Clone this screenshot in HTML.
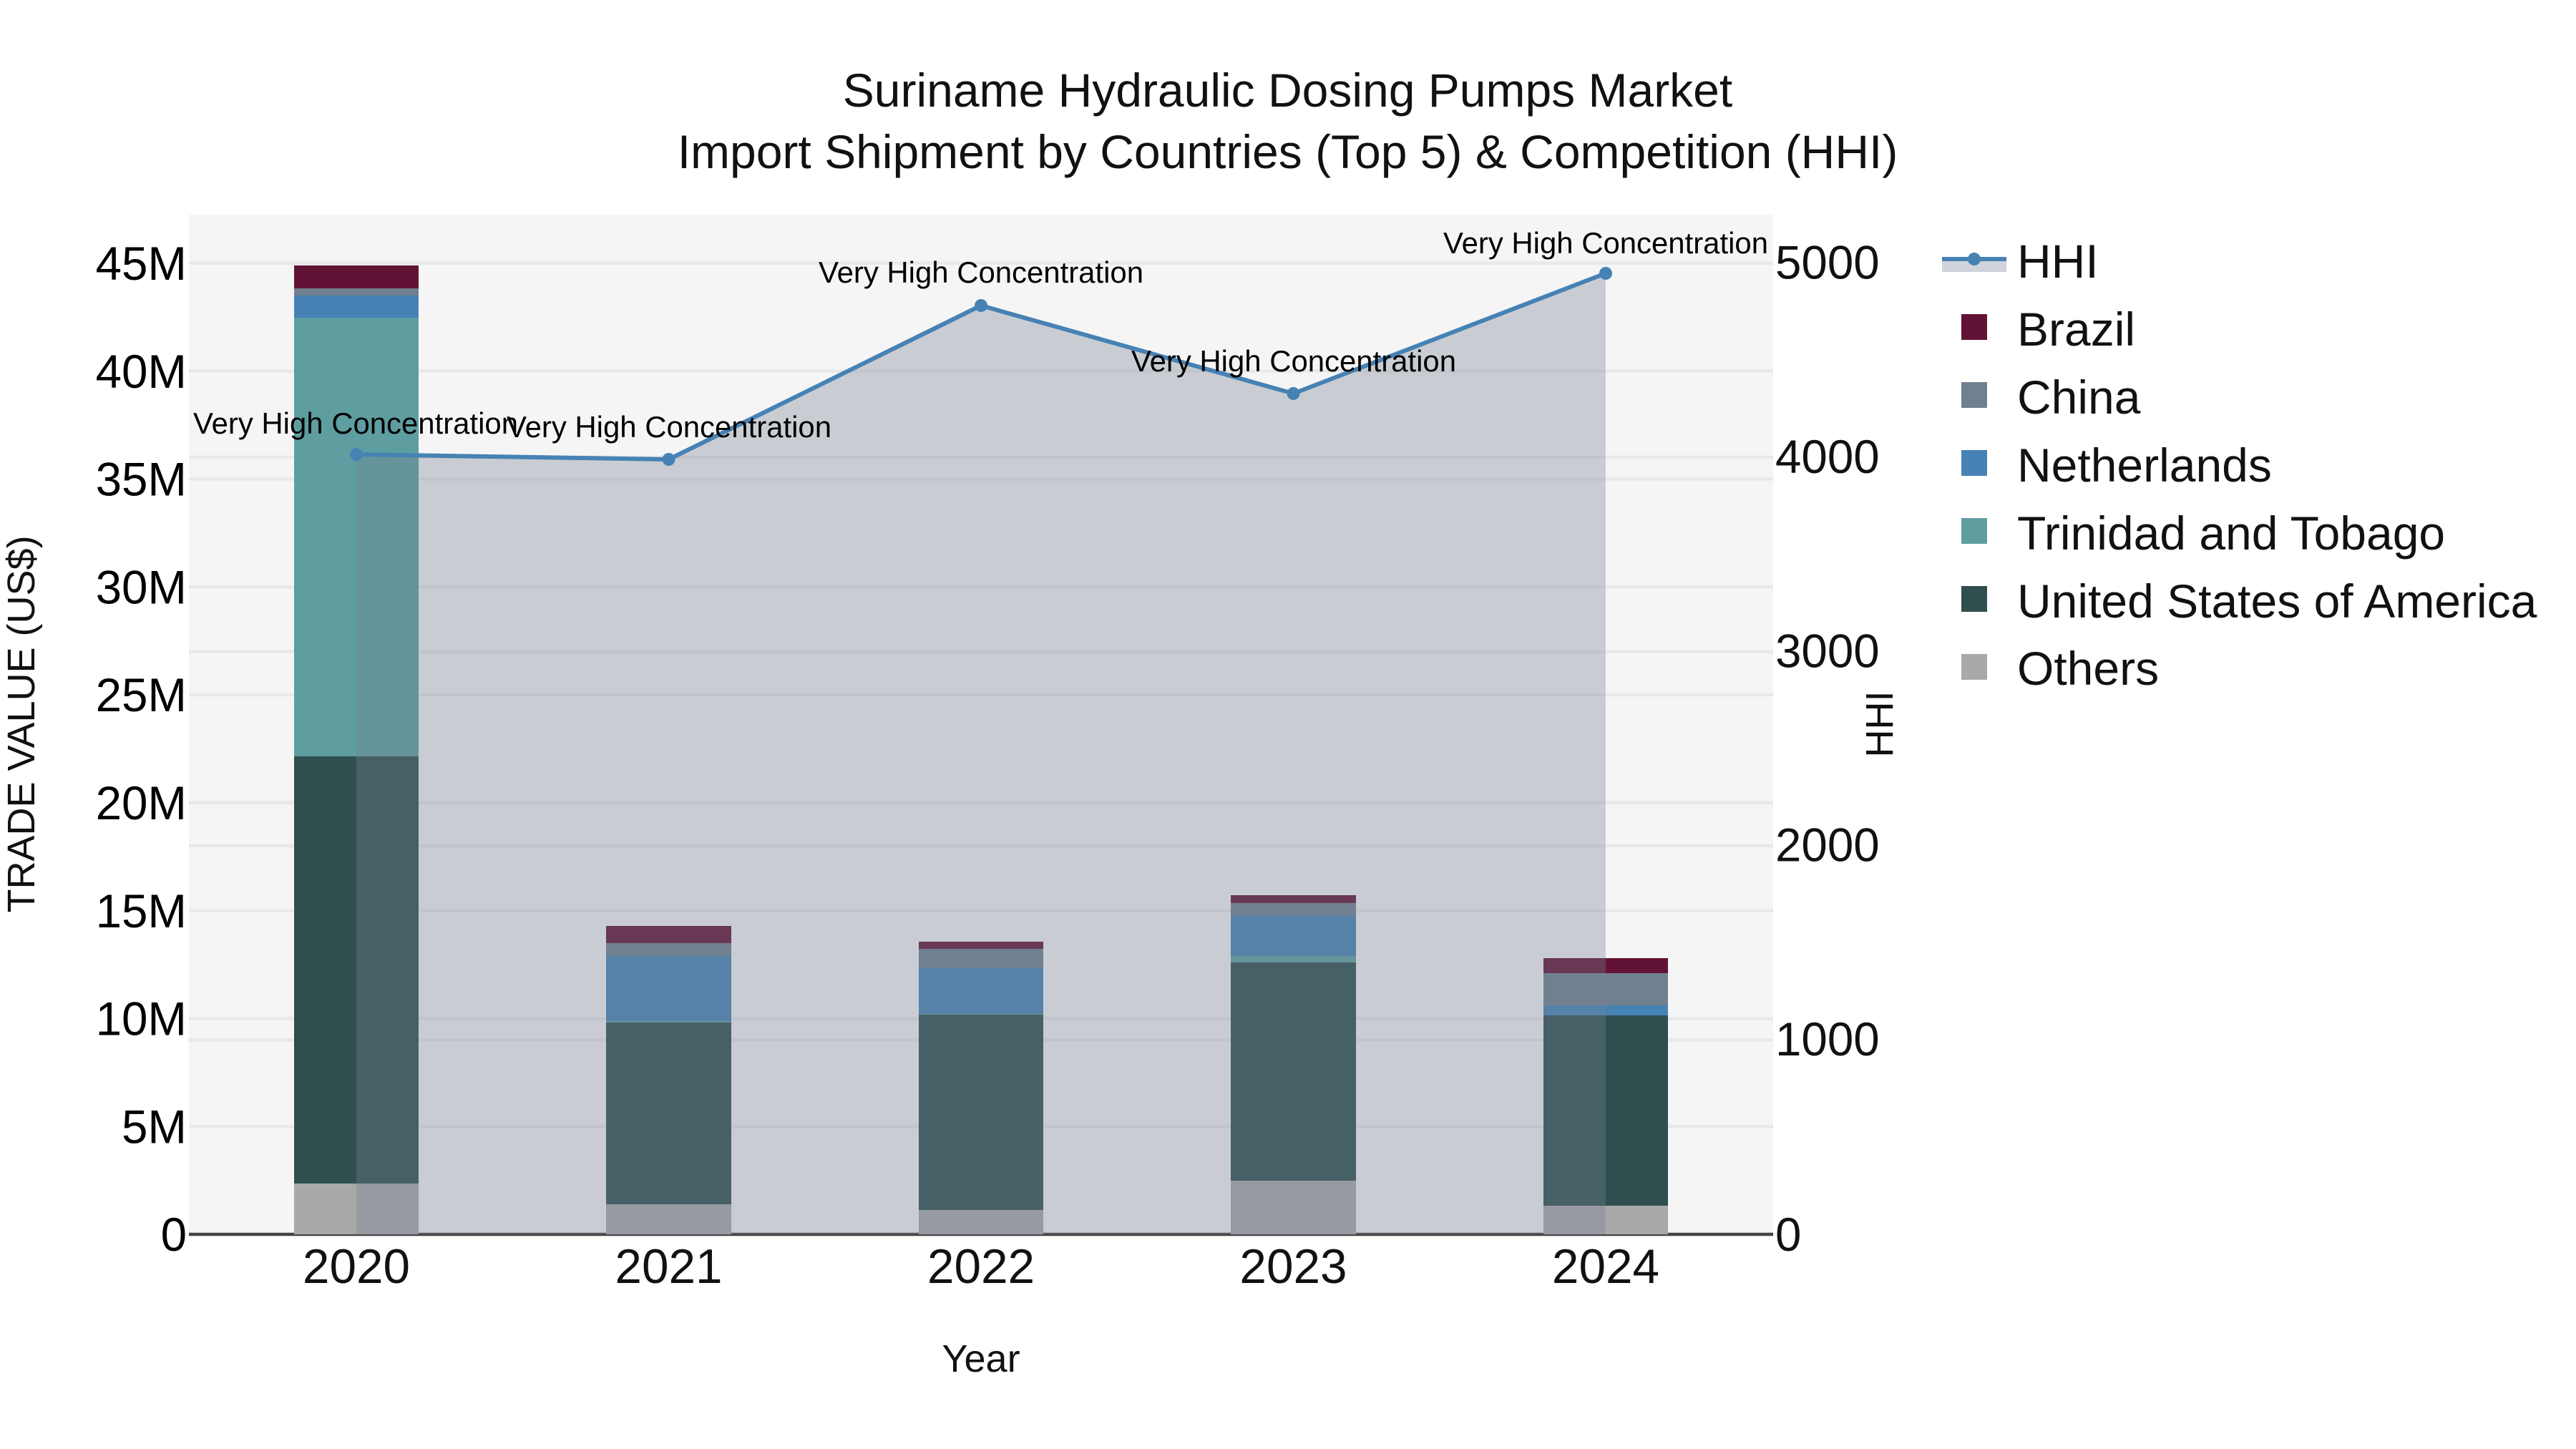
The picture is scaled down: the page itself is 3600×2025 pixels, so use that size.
<!DOCTYPE html>
<html lang="en">
<head>
<meta charset="utf-8">
<title>Suriname Hydraulic Dosing Pumps Market</title>
<style>
html,body{margin:0;padding:0;background:#fff;width:3600px;height:2025px;overflow:hidden}
svg{display:block}
text{font-family:"Liberation Sans",Arial,sans-serif}
.t{font-size:66px;fill:#111;text-anchor:middle}
.yl{font-size:65.5px;fill:#000;text-anchor:end}
.yr{font-size:65.5px;fill:#111;text-anchor:start}
.x{font-size:67.5px;fill:#111;text-anchor:middle}
.lg{font-size:66px;fill:#111}
.an{font-size:41.9px;fill:#000;text-anchor:middle}
.ax{font-size:54px;fill:#111;text-anchor:middle}
</style>
</head>
<body>
<svg width="3600" height="2025" viewBox="0 0 3600 2025" xmlns="http://www.w3.org/2000/svg">
<rect width="3600" height="2025" fill="#fff"/>
<rect x="264" y="300" width="2214" height="1425" fill="#f5f5f5"/>
<!-- gridlines -->
<g stroke="#e8e8e8" stroke-width="4.5">
<line x1="264" x2="2478" y1="367.8" y2="367.8"/>
<line x1="264" x2="2478" y1="518.6" y2="518.6"/>
<line x1="264" x2="2478" y1="669.4" y2="669.4"/>
<line x1="264" x2="2478" y1="820.2" y2="820.2"/>
<line x1="264" x2="2478" y1="971" y2="971"/>
<line x1="264" x2="2478" y1="1121.8" y2="1121.8"/>
<line x1="264" x2="2478" y1="1272.6" y2="1272.6"/>
<line x1="264" x2="2478" y1="1423.4" y2="1423.4"/>
<line x1="264" x2="2478" y1="1574.2" y2="1574.2"/>
<line x1="264" x2="2478" y1="639" y2="639"/>
<line x1="264" x2="2478" y1="910.8" y2="910.8"/>
<line x1="264" x2="2478" y1="1182" y2="1182"/>
<line x1="264" x2="2478" y1="1453.4" y2="1453.4"/>
</g>
<line x1="264" x2="2478" y1="1725" y2="1725" stroke="#444" stroke-width="4.5"/>
<!-- bars 2020 -->
<g shape-rendering="crispEdges">
<rect x="411" y="371" width="174" height="32" fill="#621335"/>
<rect x="411" y="403" width="174" height="10" fill="#708090"/>
<rect x="411" y="413" width="174" height="31" fill="#4682b4"/>
<rect x="411" y="444" width="174" height="613" fill="#5f9ea0"/>
<rect x="411" y="1057" width="174" height="597" fill="#2f4f4f"/>
<rect x="411" y="1654" width="174" height="71" fill="#a9a9a9"/>
<!-- 2021 -->
<rect x="847" y="1294" width="175" height="24" fill="#621335"/>
<rect x="847" y="1318" width="175" height="18" fill="#708090"/>
<rect x="847" y="1336" width="175" height="91" fill="#4682b4"/>
<rect x="847" y="1427" width="175" height="2" fill="#5f9ea0"/>
<rect x="847" y="1429" width="175" height="254" fill="#2f4f4f"/>
<rect x="847" y="1683" width="175" height="42" fill="#a9a9a9"/>
<!-- 2022 -->
<rect x="1284" y="1316" width="174" height="10" fill="#621335"/>
<rect x="1284" y="1326" width="174" height="27" fill="#708090"/>
<rect x="1284" y="1353" width="174" height="64" fill="#4682b4"/>
<rect x="1284" y="1417" width="174" height="1" fill="#5f9ea0"/>
<rect x="1284" y="1418" width="174" height="273" fill="#2f4f4f"/>
<rect x="1284" y="1691" width="174" height="34" fill="#a9a9a9"/>
<!-- 2023 -->
<rect x="1720" y="1251" width="175" height="11" fill="#621335"/>
<rect x="1720" y="1262" width="175" height="18" fill="#708090"/>
<rect x="1720" y="1280" width="175" height="56" fill="#4682b4"/>
<rect x="1720" y="1336" width="175" height="9" fill="#5f9ea0"/>
<rect x="1720" y="1345" width="175" height="305" fill="#2f4f4f"/>
<rect x="1720" y="1650" width="175" height="75" fill="#a9a9a9"/>
<!-- 2024 -->
<rect x="2157" y="1339" width="174" height="21" fill="#621335"/>
<rect x="2157" y="1360" width="174" height="45" fill="#708090"/>
<rect x="2157" y="1405" width="174" height="14" fill="#4682b4"/>
<rect x="2157" y="1419" width="174" height="266" fill="#2f4f4f"/>
<rect x="2157" y="1685" width="174" height="40" fill="#a9a9a9"/>
</g>
<!-- HHI area + line -->
<path d="M498 635 L934.5 642 L1371 427 L1807.5 550 L2244 382 L2244 1725 L498 1725 Z" fill="#748292" fill-opacity="0.34"/>
<path d="M498 635 L934.5 642 L1371 427 L1807.5 550 L2244 382" fill="none" stroke="#4682b4" stroke-width="6" stroke-linejoin="round"/>
<g fill="#4682b4">
<circle cx="498" cy="635" r="9"/>
<circle cx="934.5" cy="642" r="9"/>
<circle cx="1371" cy="427" r="9"/>
<circle cx="1807.5" cy="550" r="9"/>
<circle cx="2244" cy="382" r="9"/>
</g>
<!-- annotations -->
<text class="an" x="497" y="606">Very High Concentration</text>
<text class="an" x="935" y="611">Very High Concentration</text>
<text class="an" x="1371" y="395">Very High Concentration</text>
<text class="an" x="1808" y="519">Very High Concentration</text>
<text class="an" x="2244" y="354">Very High Concentration</text>
<!-- title -->
<text class="t" x="1799.5" y="149">Suriname Hydraulic Dosing Pumps Market</text>
<text class="t" x="1799.5" y="235">Import Shipment by Countries (Top 5) &amp; Competition (HHI)</text>
<!-- left ticks -->
<text class="yl" x="261" y="391">45M</text>
<text class="yl" x="261" y="542">40M</text>
<text class="yl" x="261" y="692.5">35M</text>
<text class="yl" x="261" y="843.5">30M</text>
<text class="yl" x="261" y="994">25M</text>
<text class="yl" x="261" y="1145">20M</text>
<text class="yl" x="261" y="1296">15M</text>
<text class="yl" x="261" y="1446.5">10M</text>
<text class="yl" x="261" y="1597.5">5M</text>
<text class="yl" x="261" y="1748">0</text>
<!-- right ticks -->
<text class="yr" x="2481" y="389.5">5000</text>
<text class="yr" x="2481" y="661">4000</text>
<text class="yr" x="2481" y="932.5">3000</text>
<text class="yr" x="2481" y="1203.5">2000</text>
<text class="yr" x="2481" y="1475">1000</text>
<text class="yr" x="2481" y="1748">0</text>
<!-- x ticks -->
<text class="x" x="498" y="1793">2020</text>
<text class="x" x="934.5" y="1793">2021</text>
<text class="x" x="1371" y="1793">2022</text>
<text class="x" x="1807.5" y="1793">2023</text>
<text class="x" x="2244" y="1793">2024</text>
<!-- axis titles -->
<text class="ax" x="1371" y="1917">Year</text>
<text class="ax" transform="translate(48,1012) rotate(-90)" x="0" y="0">TRADE VALUE (US$)</text>
<text class="ax" transform="translate(2645,1012) rotate(-90)" x="0" y="0">HHI</text>
<!-- legend -->
<rect x="2714" y="362" width="90" height="18" fill="#748292" fill-opacity="0.34"/>
<line x1="2714" x2="2804" y1="362" y2="362" stroke="#4682b4" stroke-width="6"/>
<circle cx="2759" cy="362" r="9" fill="#4682b4"/>
<text class="lg" x="2819" y="388">HHI</text>
<rect x="2741" y="439" width="36" height="36" fill="#621335"/>
<text class="lg" x="2819" y="483">Brazil</text>
<rect x="2741" y="534" width="36" height="36" fill="#708090"/>
<text class="lg" x="2819" y="578">China</text>
<rect x="2741" y="629" width="36" height="36" fill="#4682b4"/>
<text class="lg" x="2819" y="673">Netherlands</text>
<rect x="2741" y="724" width="36" height="36" fill="#5f9ea0"/>
<text class="lg" x="2819" y="768">Trinidad and Tobago</text>
<rect x="2741" y="819" width="36" height="36" fill="#2f4f4f"/>
<text class="lg" x="2819" y="863">United States of America</text>
<rect x="2741" y="914" width="36" height="36" fill="#a9a9a9"/>
<text class="lg" x="2819" y="957">Others</text>
</svg>
</body>
</html>
